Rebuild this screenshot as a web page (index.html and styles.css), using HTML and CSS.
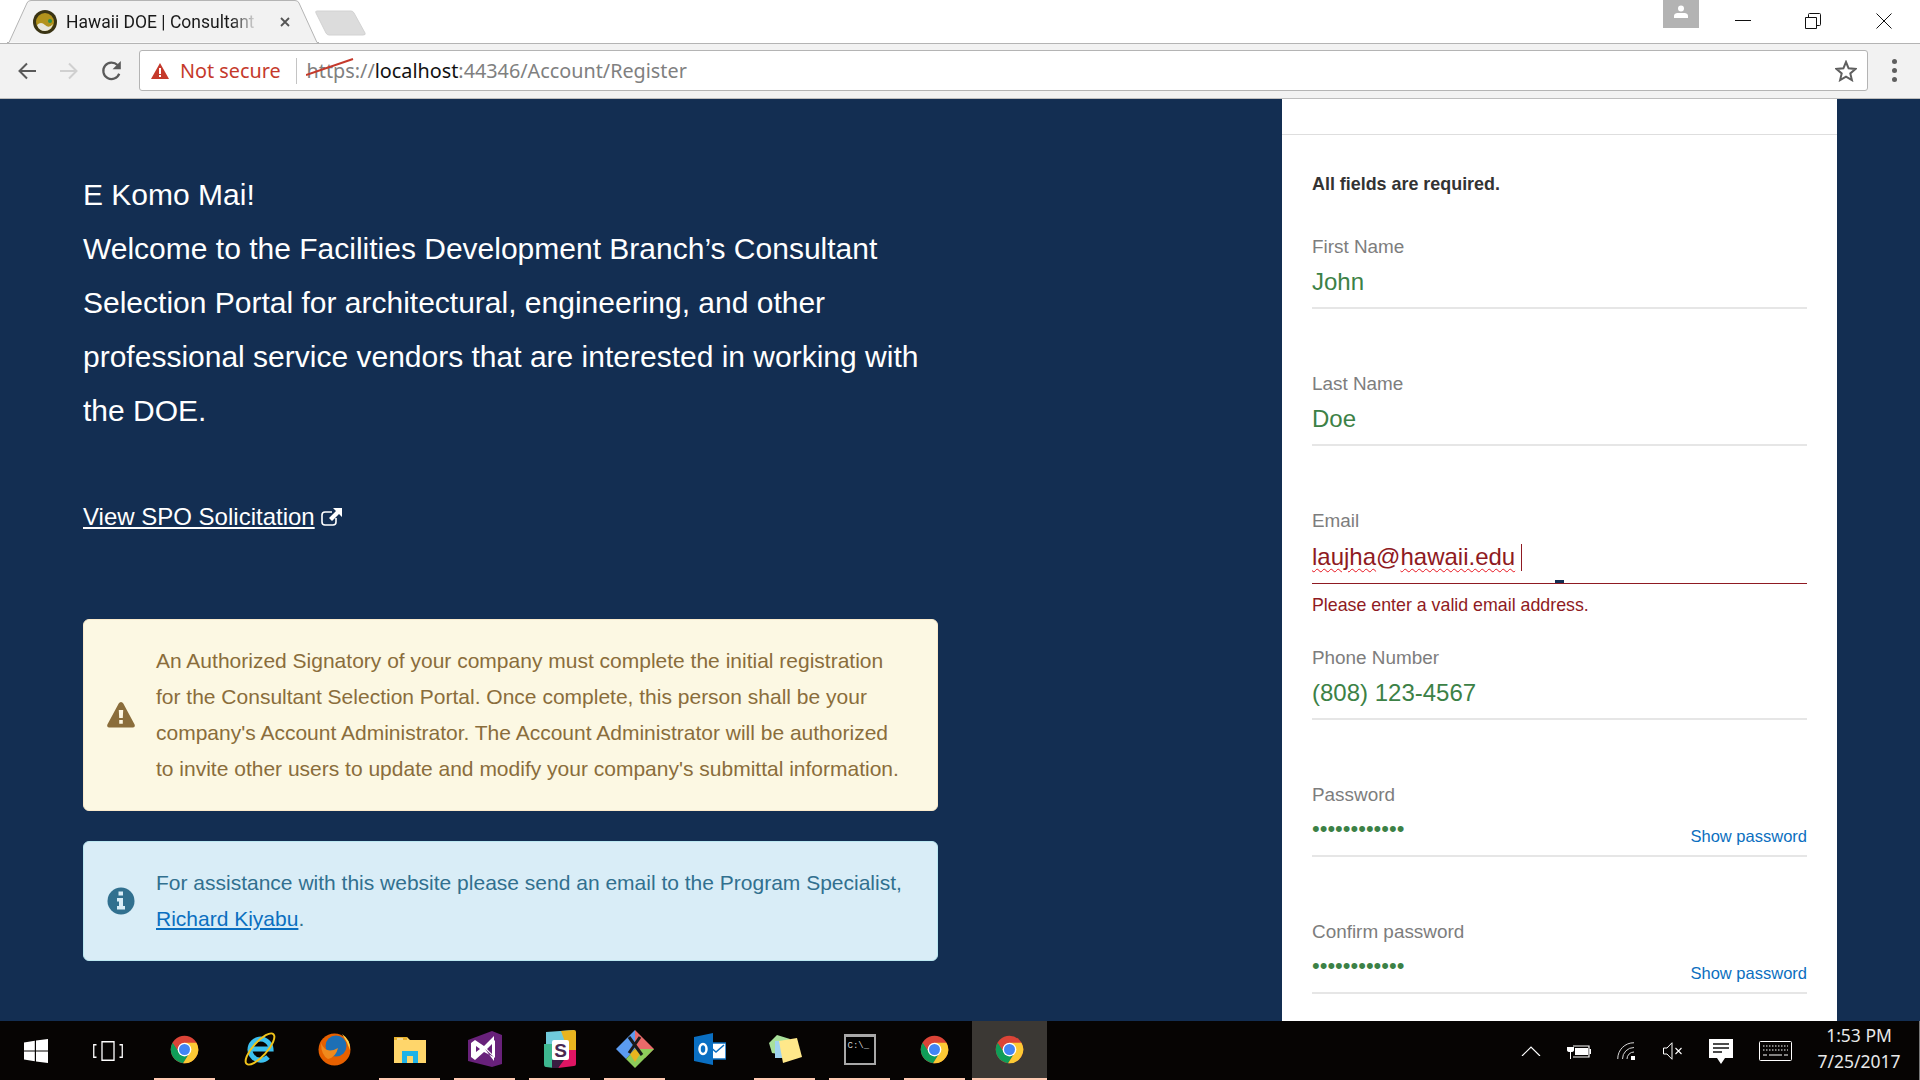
FILE: index.html
```html
<!DOCTYPE html>
<html>
<head>
<meta charset="UTF-8">
<title>Hawaii DOE | Consultant Selection Portal</title>
<link rel="stylesheet" href="styles.css">
</head>
<body>

<svg class="defs" width="0" height="0">
  <symbol id="chrome" viewBox="0 0 48 48">
    <circle cx="24" cy="24" r="20" fill="#db4437"/>
    <path d="M6.7 14A20 20 0 0 0 22 43.9L32 28H16Z" fill="#0f9d58"/>
    <path d="M41.3 14A20 20 0 0 1 22 43.9L32 28L24 14Z" fill="#fcc934"/>
    <circle cx="24" cy="24" r="10" fill="#fff"/>
    <circle cx="24" cy="24" r="8" fill="#4285f4"/>
  </symbol>
</svg>

<!-- browser window -->
<div class="tabstrip">
  <div class="tab">
    <svg class="tab-shape" width="312" height="43" viewBox="0 0 312 43"><path d="M0 42.5H2L20 3Q21 .5 24 .5H288Q291 .5 292 3L310 42.5H312" fill="#f2f2f2" stroke="#b4b4b4"/></svg>
    <svg class="favicon" width="24" height="24" viewBox="0 0 24 24">
      <circle cx="12" cy="12" r="12" fill="#3a3414"/>
      <circle cx="12" cy="12" r="9" fill="#b2931c"/>
      <path d="M4 15Q8 11 12 15T20 14Q18 21 12 21T4 15Z" fill="#e6e6dc"/>
      <circle cx="17" cy="11" r="2" fill="#2f8f4a"/>
    </svg>
    <span class="tab-title">Hawaii DOE | Consultant</span>
    <svg class="tab-close" width="10" height="10" viewBox="0 0 10 10"><path d="M1 1L9 9M9 1L1 9" stroke="#555" stroke-width="1.8"/></svg>
  </div>
  <svg class="newtab" width="52" height="26" viewBox="0 0 52 26"><path d="M2 1H36Q38 1 39 3L50 23Q51 25 48 25H14Q12 25 11 23L1 3Q0 1 2 1Z" fill="#dcdcdc" stroke="#d2d2d2"/></svg>
  <div class="window-btns">
    <div class="avatar">
      <svg width="14" height="14" viewBox="0 0 14 14"><circle cx="7" cy="3.6" r="3" fill="#fff"/><path d="M0 13V11Q0 8.5 3 8H11Q14 8.5 14 11V13Z" fill="#fff"/></svg>
    </div>
    <svg class="win-min" width="16" height="16" viewBox="0 0 16 16"><path d="M0 8.5H16" stroke="#111"/></svg>
    <svg class="win-max" width="16" height="16" viewBox="0 0 16 16"><path d="M.5 4.5H11.5V15.5H.5ZM3.5 4V1.5Q3.5.5 4.5.5H14.5Q15.5.5 15.5 1.5V11.5Q15.5 12.5 14.5 12.5H12" fill="none" stroke="#111"/></svg>
    <svg class="win-close" width="16" height="16" viewBox="0 0 16 16"><path d="M.5.5L15.5 15.5M15.5.5L.5 15.5" stroke="#111"/></svg>
  </div>
</div>

<div class="toolbar">
  <svg class="nav-btn" width="20" height="20" viewBox="0 0 20 20"><path d="M19 10H3M10 2.5L2.5 10L10 17.5" fill="none" stroke="#5a5a5a" stroke-width="2"/></svg>
  <svg class="nav-btn" width="20" height="20" viewBox="0 0 20 20"><path d="M1 10H17M10 2.5L17.5 10L10 17.5" fill="none" stroke="#d0d0d0" stroke-width="2"/></svg>
  <svg class="nav-btn reload" width="22" height="22" viewBox="0 0 20 20"><path d="M16.6 12.5A7.5 7.5 0 1 1 15 4.6" fill="none" stroke="#5a5a5a" stroke-width="2"/><path d="M18 1V8.5H10.5Z" fill="#5a5a5a"/></svg>
  <div class="omnibox">
    <svg class="warn-icon" width="18" height="16" viewBox="0 0 18 16"><path d="M9 0L18 16H0Z" fill="#c5392b"/><path d="M8 5H10V11H8ZM8 12H10V14H8Z" fill="#fff"/></svg>
    <span class="not-secure">Not secure</span>
    <span class="omni-sep"></span>
    <span class="url"><span class="url-https">https<svg class="strike" width="48" height="18" viewBox="0 0 48 18"><path d="M0 17L47 1" stroke="#c5392b" stroke-width="2"/></svg></span>://<span class="url-host">localhost</span>:44346/Account/Register</span>
    <svg class="star" width="22" height="22" viewBox="0 0 22 22"><path d="M11 2L13.6 8.3L20.5 8.9L15.3 13.4L16.9 20.1L11 16.6L5.1 20.1L6.7 13.4L1.5 8.9L8.4 8.3Z" fill="none" stroke="#5f5f5f" stroke-width="2"/></svg>
  </div>
  <div class="menu-dots"><span></span><span></span><span></span></div>
</div>

<!-- page -->
<div class="page">
  <div class="intro">
    <p class="welcome">E Komo Mai!<br>Welcome to the Facilities Development Branch’s Consultant Selection Portal for architectural, engineering, and other professional service vendors that are interested in working with the DOE.</p>
    <p class="spo">
      <a href="#">View SPO Solicitation</a>
      <svg class="ext-icon" width="21" height="18" viewBox="0 0 21 18"><path d="M11 4H4Q1 4 1 7V14Q1 17 4 17H12Q15 17 15 14V10" fill="none" stroke="#fff" stroke-width="1.6"/><path d="M12 0H21V9L18 6L11 13L8 10L15 3Z" fill="#fff"/></svg>
    </p>
    <div class="alert alert-warning">
      <svg class="alert-icon" width="28" height="26" viewBox="0 0 28 26"><path d="M14 0Q15.500 0 16.300 1.500L27.600 22.500Q28.500 25 26 25.500H2Q-.5 25 .4 22.500L11.700 1.500Q12.500 0 14 0Z" fill="#8a6d3b"/><path d="M11.800 8H16.200L15.800 16H12.200ZM12.200 18H15.800V21.800H12.200Z" fill="#fdf7e3"/></svg>
      <p>An Authorized Signatory of your company must complete the initial registration for the Consultant Selection Portal. Once complete, this person shall be your company's Account Administrator. The Account Administrator will be authorized to invite other users to update and modify your company's submittal information.</p>
    </div>
    <div class="alert alert-info">
      <svg class="alert-icon" width="28" height="28" viewBox="0 0 28 28"><circle cx="14" cy="14" r="13.500" fill="#31708f"/><path d="M11.500 4.500H16V8.500H11.500ZM10 11H16V19H18V22.500H10V19H12V14.500H10Z" fill="#d9edf7"/></svg>
      <p>For assistance with this website please send an email to the Program Specialist, <a href="#">Richard Kiyabu</a>.</p>
    </div>
  </div>

  <form class="panel">
    <div class="panel-top"></div>
    <div class="panel-body">
      <p class="required">All fields are required.</p>

      <div class="field">
        <label>First Name</label>
        <div class="value">John</div>
      </div>
      <div class="field">
        <label>Last Name</label>
        <div class="value">Doe</div>
      </div>
      <div class="field field-error">
        <label>Email</label>
        <div class="value"><span class="typo">laujha</span>@<span class="typo">hawaii.edu</span><span class="caret"></span></div>
        <span class="notch"></span>
      </div>
      <p class="error-msg">Please enter a valid email address.</p>
      <div class="field">
        <label>Phone Number</label>
        <div class="value">(808) 123-4567</div>
      </div>
      <div class="field">
        <label>Password</label>
        <div class="value value-pass"><span class="dots">••••••••••••</span><a href="#">Show password</a></div>
      </div>
      <div class="field">
        <label>Confirm password</label>
        <div class="value value-pass"><span class="dots">••••••••••••</span><a href="#">Show password</a></div>
      </div>
    </div>
  </form>
</div>

<!-- windows taskbar -->
<div class="taskbar">
  <div class="start">
    <svg width="24" height="24" viewBox="0 0 24 24"><path d="M0 3.400L10.800 1.800V11.400H0ZM12 1.600L24 0V11.400H12ZM0 12.600H10.800V22.200L0 20.600ZM12 12.600H24V24L12 22.400Z" fill="#fff"/></svg>
  </div>
  <div class="taskview">
    <svg width="30" height="20" viewBox="0 0 30 20"><path d="M9 .75H21V19.250H9ZM3.500 3.750H.75V16.250H3.500M26.500 3.750H29.250V16.250H26.500" fill="none" stroke="#fff" stroke-width="1.300"/></svg>
  </div>

  <div class="task open"><svg width="33" height="33"><use href="#chrome"/></svg></div>
  <div class="task">
    <svg width="34" height="36" viewBox="0 0 34 36">
      <path d="M7 18H28A10.500 10.500 0 1 0 25 26" fill="none" stroke="#3cc0ef" stroke-width="5"/>
      <ellipse cx="17" cy="18" rx="20" ry="7" transform="rotate(-48 17 18)" fill="none" stroke="#f0c31a" stroke-width="2"/>
    </svg>
  </div>
  <div class="task">
    <svg width="33" height="33" viewBox="0 0 33 33">
      <circle cx="16.500" cy="16.500" r="16" fill="#e66000"/>
      <circle cx="18" cy="13" r="10.500" fill="#1d6fb5"/>
      <path d="M3 10Q8 22 20 15Q18 24 10 26Q3 22 3 10Z" fill="#f08a1d"/>
      <path d="M24 1Q33 7 32 17Q29 8 24 1Z" fill="#ffd24a"/>
    </svg>
  </div>
  <div class="task open">
    <svg width="32" height="27" viewBox="0 0 32 27">
      <path d="M0 1H13L16 4H32V27H0Z" fill="#ffd66b"/>
      <path d="M0 1H13V4H0Z" fill="#e8b22e"/>
      <path d="M3 2.500H9V3.500H3Z" fill="#fff"/>
      <path d="M8 27V15H24V27H19V20H13V27Z" fill="#1fb3e8"/>
    </svg>
  </div>
  <div class="task open">
    <svg width="34" height="36" viewBox="0 0 34 36">
      <path d="M24 0L34 4V33L24 36L0 30V9Z" fill="#68217a"/>
      <path d="M4 11L13 18L4 25ZM27 9V27L17 18ZM7 9L16 15L26 5V11L17 18L26 30V26L16 21L7 29L3 26V12Z" fill="#fff"/>
      <path d="M8 15L12 18L8 21ZM24 13V23L19 18Z" fill="#68217a"/>
    </svg>
  </div>
  <div class="task open">
    <svg width="32" height="38" viewBox="0 0 32 38">
      <path d="M2 2L30 0V14L2 14Z" fill="#70cadb"/>
      <path d="M17 1L30 0Q32 0 32 2V20H24Z" fill="#e8b41f"/>
      <path d="M24 20H32V34Q32 36 30 36L14 38Z" fill="#df1563"/>
      <path d="M0 14H10V38L2 37Q0 37 0 34Z" fill="#3eb890"/>
      <path d="M8 30H20L14 38H8Z" fill="#3a1d42"/>
      <rect x="8" y="10" width="17" height="20" rx="2" fill="#fff"/>
      <text class="slack-s" x="16.500" y="27">S</text>
    </svg>
  </div>
  <div class="task open">
    <svg width="40" height="40" viewBox="0 0 40 40">
      <path d="M20 1L39 20L30 29L20 20Z" fill="#e86a6a"/>
      <path d="M20 1L1 20L11 30L20 20Z" fill="#5b9bf0"/>
      <path d="M39 20L20 39L11 30L20 20Z" fill="#8dcb5a"/>
      <path d="M15 25L20 20L25 25L20 33Z" fill="#e8b41f"/>
      <path d="M14 8L27 26M25 8L14 24" stroke="#1a1a1a" stroke-width="3"/>
    </svg>
  </div>
  <div class="task">
    <svg width="32" height="32" viewBox="0 0 32 32">
      <path d="M13 10H32V26H13Z" fill="#fff" stroke="#0a6fc2" stroke-width="1.500"/>
      <path d="M15 13L22 19L30 12" fill="none" stroke="#0a6fc2" stroke-width="1.500"/>
      <path d="M0 4L19 0V32L0 28Z" fill="#0a6fc2"/>
      <ellipse cx="9" cy="16" rx="3.500" ry="5" fill="none" stroke="#fff" stroke-width="2.500"/>
    </svg>
  </div>
  <div class="task open">
    <svg width="34" height="28" viewBox="0 0 34 28">
      <path d="M1 8L9 0L22 4L16 20L4 18Z" fill="#a8e09a"/>
      <path d="M7 6H22V23H7Z" fill="#9fd3f0"/>
      <path d="M11 6L29 3L34 22L15 28Z" fill="#ffe88a"/>
    </svg>
  </div>
  <div class="task open">
    <div class="cmd"><span>C:\_</span></div>
  </div>
  <div class="task open"><svg width="33" height="33"><use href="#chrome"/></svg></div>
  <div class="task open active"><svg width="33" height="33"><use href="#chrome"/></svg></div>

  <div class="tray">
    <svg width="20" height="10" viewBox="0 0 20 10"><path d="M1 10L10 1L19 10" fill="none" stroke="#fff" stroke-width="1.200"/></svg>
    <svg width="24" height="16" viewBox="0 0 24 16"><path d="M6 3H22V14H6" fill="none" stroke="#fff" stroke-width="1.200"/><path d="M8 5H21V12H8ZM22.500 6H24V11H22.500ZM1.500 0V4M5.500 0V4M0 4H7V7Q7 9 4 9V16H3V9Q0 9 0 7Z" fill="#fff"/></svg>
    <svg width="20" height="18" viewBox="0 0 20 18"><path d="M.75 17A16 16 0 0 1 17 .75M5.500 17A11.500 11.500 0 0 1 17 5.500M10 17A7 7 0 0 1 17 10" fill="none" stroke="#d8d8d8"/><rect x="14" y="14" width="4" height="4" fill="#fff"/></svg>
    <svg width="20" height="18" viewBox="0 0 20 18"><path d="M.5 6H4L9 .75V17.250L4 12H.5Z" fill="none" stroke="#fff"/><path d="M12.500 6L18.500 12M18.500 6L12.500 12" stroke="#fff" stroke-width="1.100"/></svg>
    <svg width="24" height="25" viewBox="0 0 24 25"><path d="M0 0H24V19H16L12 25L8 19H0Z" fill="#fff"/><path d="M4 5H20M4 9H20M4 13H13" stroke="#111" stroke-width="1.300"/></svg>
    <svg width="33" height="20" viewBox="0 0 33 20"><rect x=".5" y=".5" width="32" height="19" rx="1" fill="none" stroke="#fff"/><path d="M4 5H29M4 9H29" stroke="#fff" stroke-dasharray="1.500 1.500"/><path d="M4 14H8M10 14H23M25 14H29" stroke="#fff"/></svg>
  </div>
  <div class="clock">
    <div>1:53 PM</div>
    <div>7/25/2017</div>
  </div>
</div>

</body>
</html>
```

FILE: styles.css
```css
html, body {
	margin: 0;
	padding: 0;
}

body {
	display: flex;
	flex-direction: column;
	width: 1920px;
	height: 1080px;
	overflow: hidden;
	font-family: "Liberation Sans", Arial, sans-serif;
}

p {
	margin: 0;
}

.defs {
	position: absolute;
}

/* browser window */
.tabstrip {
	display: flex;
	flex: 0 0 42px;
	background: #fff;
	position: relative;
}

.tab {
	display: flex;
	align-items: center;
	position: relative;
	width: 312px;
	margin-left: 7px;
	height: 43px;
	z-index: 1;
}

.tab-shape {
	position: absolute;
	left: 0;
	top: 0;
}

.favicon {
	position: relative;
	margin-left: 26px;
}

.tab-title {
	position: relative;
	width: 192px;
	margin-left: 9px;
	white-space: nowrap;
	font-family: Roboto, sans-serif;
	font-size: 17.5px;
	color: #1a1a1a;
	-webkit-mask-image: linear-gradient(to right, #000 86%, transparent 100%);
	mask-image: linear-gradient(to right, #000 86%, transparent 100%);
}

.tab-close {
	position: relative;
	margin-left: 22px;
}

.newtab {
	margin: 10px 0 0 -4px;
}

.window-btns {
	display: flex;
	align-items: flex-start;
	margin-left: auto;
}

.avatar {
	display: flex;
	align-items: center;
	justify-content: center;
	width: 36px;
	height: 28px;
	padding-bottom: 4px;
	box-sizing: border-box;
	background: #b3b3b3;
	margin-right: 36px;
}

.win-min {
	margin: 12px 0 0 0;
}

.win-max {
	margin: 13px 0 0 54px;
}

.win-close {
	margin: 13px 28px 0 55px;
}

.toolbar {
	display: flex;
	align-items: center;
	flex: 0 0 56px;
	box-sizing: border-box;
	padding: 0 0 1px 17px;
	background: #f2f2f2;
	border-top: 1px solid #b4b4b4;
	border-bottom: 1px solid #bdbdbd;
}

.nav-btn {
	margin-right: 22px;
}

.nav-btn.reload {
	margin-right: 21px;
}

.omnibox {
	display: flex;
	align-items: center;
	width: 1729px;
	height: 41px;
	box-sizing: border-box;
	margin-left: -5px;
	padding: 0 10px 0 11px;
	background: #fff;
	border: 1px solid #b4b4b4;
	border-radius: 3px;
	font-family: "Noto Sans", sans-serif;
	font-size: 19.8px;
}

.not-secure {
	margin-left: 11px;
	color: #c5392b;
}

.omni-sep {
	width: 1px;
	height: 26px;
	margin: 0 10px 0 15px;
	background: #c4c4c4;
}

.url {
	color: #808080;
}

.url-https {
	position: relative;
}

.strike {
	position: absolute;
	left: -1px;
	top: 1px;
}

.url-host {
	color: #111;
}

.star {
	margin-left: auto;
}

.menu-dots {
	display: flex;
	flex-direction: column;
	gap: 4px;
	margin-left: 24px;
}

.menu-dots span {
	width: 5px;
	height: 5px;
	border-radius: 50%;
	background: #5f5f5f;
}

/* page */
.page {
	display: flex;
	flex: 0 0 922px;
	overflow: hidden;
	background: #132e52;
}

.intro {
	flex: 0 0 855px;
	padding: 69px 344px 0 83px;
}

.welcome {
	font-size: 30px;
	line-height: 54px;
	color: #fff;
}

.spo {
	display: flex;
	align-items: center;
	gap: 6px;
	height: 36px;
	margin: 61px 0 84px;
	font-size: 24px;
}

.spo a {
	color: #fff;
}

.alert {
	display: flex;
	align-items: center;
	box-sizing: border-box;
	padding: 23px 31px 23px 23px;
	border: 1px solid;
	border-radius: 6px;
	font-size: 21px;
	line-height: 36px;
}

.alert-icon {
	flex: 0 0 28px;
	margin-right: 21px;
}

.alert-warning {
	background: #fcf8e3;
	border-color: #faebcc;
	color: #8a6d3b;
}

.alert-info {
	margin-top: 30px;
	background: #d9edf7;
	border-color: #bce8f1;
	color: #31708f;
}

.alert-info a {
	color: #0b6fc0;
}

.panel {
	flex: 0 0 555px;
	background: #fff;
}

.panel-top {
	height: 35px;
	border-bottom: 1px solid #dedede;
}

.panel-body {
	padding: 0 30px;
}

.required {
	margin-top: 37px;
	font-size: 17.9px;
	line-height: 24px;
	font-weight: bold;
	color: #333;
}

.field {
	position: relative;
	margin-bottom: 63px;
	border-bottom: 2px solid #e6e6e6;
}

.required + .field {
	margin-top: 39px;
}

.field label {
	display: block;
	font-size: 18.9px;
	line-height: 24px;
	color: #7d7d7d;
}

.value {
	display: flex;
	align-items: center;
	box-sizing: border-box;
	height: 48px;
	padding-bottom: 2px;
	font-size: 24px;
	color: #3c8146;
}

.value-pass {
	justify-content: space-between;
}

.dots {
	font-size: 22px;
	margin-top: -2px;
}

.value-pass a {
	align-self: flex-end;
	padding-bottom: 7px;
	font-size: 16.5px;
	line-height: 20px;
	color: #0b6fc0;
	text-decoration: none;
}

.field-error {
	margin-bottom: 9px;
	border-bottom: 1px solid #8f1a22;
}

.field-error .value {
	height: 50px;
	color: #8f1a22;
}

.typo {
	text-decoration: underline wavy #e8141e;
	text-decoration-thickness: 1px;
	text-underline-offset: 3px;
}

.caret {
	width: 1px;
	height: 27px;
	margin-left: 6px;
	background: #8f1a22;
}

.notch {
	position: absolute;
	left: 243px;
	bottom: 0;
	width: 9px;
	height: 3px;
	background: #132e52;
}

.error-msg {
	margin-bottom: 29px;
	font-size: 17.8px;
	line-height: 24px;
	color: #8f1a22;
}

/* windows taskbar */
.taskbar {
	display: flex;
	flex: 0 0 60px;
	background: #060403;
	color: #e8e8e8;
}

.start {
	display: flex;
	align-items: center;
	width: 72px;
	padding-left: 24px;
	box-sizing: border-box;
}

.taskview {
	display: flex;
	align-items: center;
	width: 75px;
	padding-left: 21px;
	box-sizing: border-box;
}

.task {
	display: flex;
	align-items: center;
	justify-content: center;
	position: relative;
	width: 75px;
	padding-bottom: 4px;
	box-sizing: border-box;
}

.task.open::after {
	content: "";
	position: absolute;
	left: 7px;
	right: 7px;
	bottom: 0;
	height: 3px;
	background: #ffc9b2;
}

.task.active {
	background: #3b3834;
}

.task.active::after {
	left: 0;
	right: 0;
}

.slack-s {
	font-family: "Liberation Sans", sans-serif;
	font-size: 19px;
	font-weight: bold;
	fill: #4a2a52;
	text-anchor: middle;
}

.cmd {
	width: 32px;
	height: 31px;
	box-sizing: border-box;
	padding: 5px 2px;
	background: #000;
	border: 2px solid #a8a8a8;
	border-top-width: 3px;
	font-family: "Liberation Mono", monospace;
	font-size: 9px;
	line-height: 9px;
	color: #d0d0d0;
}

.tray {
	display: flex;
	align-items: center;
	gap: 26px;
	margin-left: auto;
	padding-right: 17px;
}

.clock {
	width: 100px;
	padding: 1px 10px 0 0;
	border-right: 1px solid #777;
	text-align: center;
	font-family: "Noto Sans", sans-serif;
	font-size: 17.5px;
	line-height: 26px;
}
```
